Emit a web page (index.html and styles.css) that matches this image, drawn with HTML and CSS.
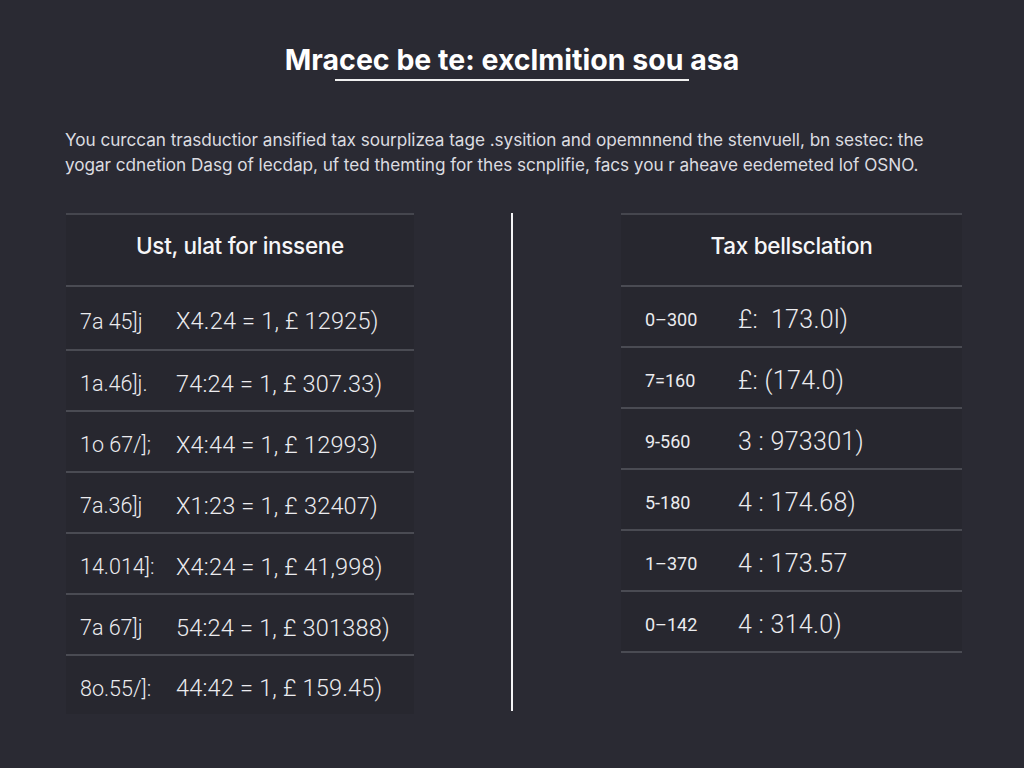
FILE: index.html
```html
<!DOCTYPE html>
<html>
<head>
<meta charset="utf-8">
<link rel="stylesheet" href="styles.css">
</head>
<body>
<div class="page">
  <header class="head">
    <h1 class="title">Mracec be te: exclmition sou asa</h1>
    <div class="rule"></div>
  </header>
  <p class="intro">You curccan trasductior ansified tax sourplizea tage .sysition and opemnnend the stenvuell, bn sestec: the yogar cdnetion Dasg of lecdap, uf ted themting for thes scnplifie, facs you r aheave eedemeted lof OSNO.</p>
  <section class="tables">
    <div class="table left">
      <div class="th">Ust, ulat for inssene</div>
      <div class="tr"><span class="c1">7a 45]j</span><span class="c2">X4.24 = 1, £ 12925)</span></div>
      <div class="tr"><span class="c1">1a.46]j.</span><span class="c2">74:24 = 1, £ 307.33)</span></div>
      <div class="tr"><span class="c1">1o 67/]; </span><span class="c2">X4:44 = 1, £ 12993)</span></div>
      <div class="tr"><span class="c1">7a.36]j</span><span class="c2">X1:23 = 1, £ 32407)</span></div>
      <div class="tr"><span class="c1">14.014]:</span><span class="c2">X4:24 = 1, £ 41,998)</span></div>
      <div class="tr"><span class="c1">7a 67]j</span><span class="c2">54:24 = 1, £ 301388)</span></div>
      <div class="tr last"><span class="c1">8o.55/]:</span><span class="c2">44:42 = 1, £ 159.45)</span></div>
    </div>
    <div class="divider"></div>
    <div class="table right">
      <div class="th">Tax bellsclation</div>
      <div class="tr"><span class="c1">0–300</span><span class="c2">£:&nbsp; 173.0l)</span></div>
      <div class="tr"><span class="c1">7=160</span><span class="c2">£: (174.0)</span></div>
      <div class="tr"><span class="c1">9-560</span><span class="c2">3 : 973301)</span></div>
      <div class="tr"><span class="c1">5-180</span><span class="c2">4 : 174.68)</span></div>
      <div class="tr"><span class="c1">1–370</span><span class="c2">4 : 173.57</span></div>
      <div class="tr end"><span class="c1">0–142</span><span class="c2">4 : 314.0)</span></div>
    </div>
  </section>
</div>
</body>
</html>
```
FILE: styles.css
```css
* { box-sizing: border-box; }
html, body { margin: 0; padding: 0; }
body {
  background: #2a2a33;
  color: #f2f2f4;
  font-family: "Inter", "Liberation Sans", sans-serif;
  width: 1024px;
  height: 768px;
  overflow: hidden;
}
.page { padding-top: 43px; }
.head { display: flex; flex-direction: column; align-items: center; }
.title {
  margin: 0;
  font-size: 28.5px;
  font-weight: 700;
  line-height: 34px;
  letter-spacing: 0;
  color: #ffffff;
}
.rule {
  width: 354px;
  height: 2px;
  background: #f0f0f0;
  margin-top: 2px;
}
.intro {
  margin: 46px 0 0 65px;
  width: 900px;
  font-family: "Inter", "Liberation Sans", sans-serif;
  font-size: 17.2px;
  line-height: 25px;
  color: #dcdce0;
  letter-spacing: -0.05px;
}
.tables {
  display: flex;
  align-items: flex-start;
  margin-top: 36px;
  padding-left: 66px;
}
.table {
  display: flex;
  flex-direction: column;
  background: #27272f;
  border-top: 2px solid #45464e;
}
.table.left { width: 348px; }
.table.right { width: 341px; }
.divider {
  width: 2px;
  height: 498px;
  background: #f4f4f6;
  margin-left: 97px;
  margin-right: 108px;
}
.th {
  height: 70px;
  padding-bottom: 9px;
  display: flex;
  align-items: center;
  justify-content: center;
  font-size: 22.5px;
  font-weight: 500;
  color: #f6f6f8;
  letter-spacing: -0.3px;
}
.right .th { font-size: 22.5px; }
.tr {
  height: 61px;
  padding-top: 6px;
  border-top: 2px solid #4a4b53;
  display: flex;
  align-items: center;
  font-family: "Roboto", "Liberation Sans", sans-serif;
  font-weight: 300;
  color: #ececef;
}
.left .tr:nth-child(2) { height: 64px; }
.left .tr.last { height: 60px; }
.right .tr.end { border-bottom: 2px solid #4a4b53; height: 63px; }
.left .c1 { width: 110px; padding-left: 14px; font-size: 21.5px; }
.left .c2 { font-size: 23.5px; letter-spacing: 0.2px; }
.right .c1 { width: 117px; padding-left: 24px; font-size: 18px; font-weight: 400; }
.right .c2 { font-size: 25px; letter-spacing: 0.3px; }
```
